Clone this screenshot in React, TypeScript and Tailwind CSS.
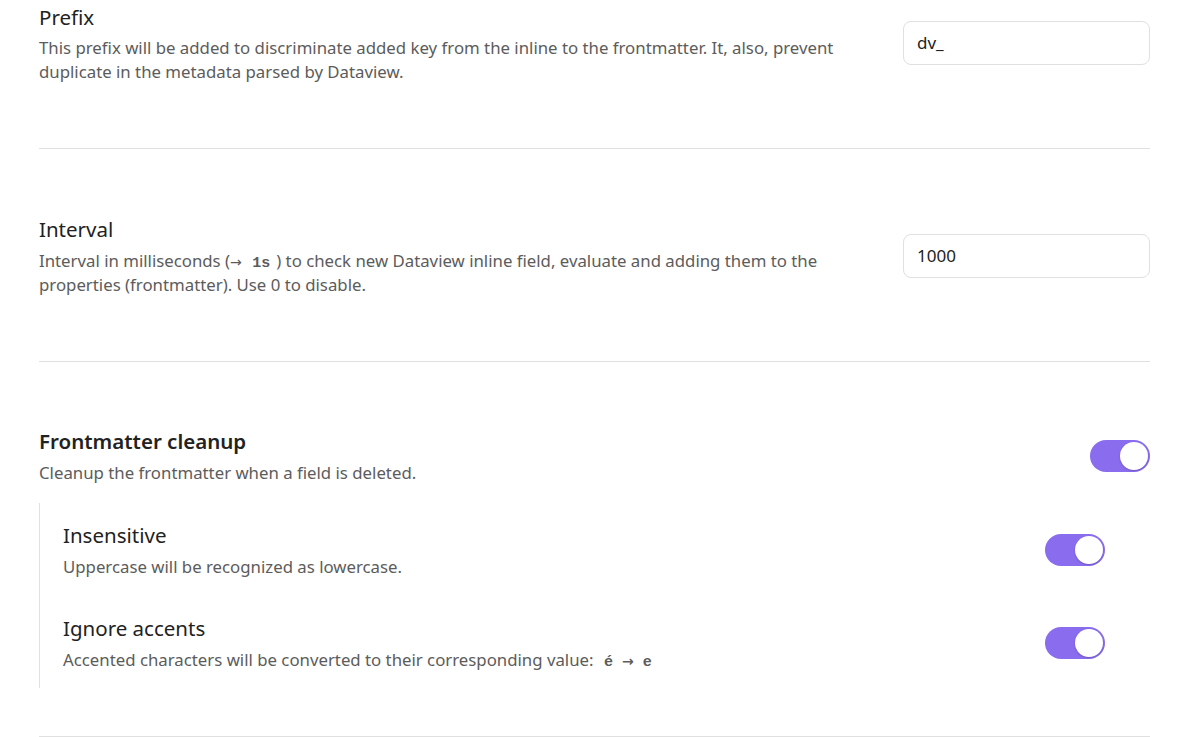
import React from "react";

const font = { fontFamily: '"Noto Sans", "Open Sans", sans-serif' };
const arrowFont = { fontFamily: '"DejaVu Sans", sans-serif' };

function Toggle() {
  return (
    <div className="relative w-[60px] h-[32px] rounded-full bg-[#8a6cef] shrink-0">
      <div className="absolute right-[2px] top-[2px] w-[28px] h-[28px] rounded-full bg-white shadow-[0_1px_2px_rgba(0,0,0,0.2)]" />
    </div>
  );
}

function Code({ children }: { children: React.ReactNode }) {
  return (
    <code
      className="text-[15px] leading-[0] text-[#5c5c5c] px-[6px] font-semibold"
      style={{ fontFamily: '"Liberation Mono", "DejaVu Sans Mono", monospace' }}
    >
      {children}
    </code>
  );
}

function Arrow() {
  return (
    <span className="text-[14px] leading-[0]" style={arrowFont}>
      →
    </span>
  );
}

function TextInput({ value }: { value: string }) {
  return (
    <div className="w-[247px] h-[44px] rounded-[8px] border border-[#e0e0e0] bg-white flex items-center px-[13px] text-[17px] text-[#222222] shrink-0">
      {value}
    </div>
  );
}

const titleCls = "text-[20.5px] leading-[30px]";
const descCls = "text-[16.8px] leading-[24px] text-[#5c5c5c]";

export default function App() {
  return (
    <div className="w-[1179px] h-[737px] bg-white overflow-hidden text-[#222222]" style={font}>
      <div className="pl-[39px] pr-[29px] pt-[2px]">
        {/* Prefix */}
        <div className="flex items-center justify-between">
          <div className="w-[845px]">
            <div className={titleCls}>Prefix</div>
            <div className={"mt-[4px] " + descCls}>
              This prefix will be added to discriminate added key from the inline to the frontmatter. It, also, prevent duplicate in the metadata parsed by Dataview.
            </div>
          </div>
          <TextInput value="dv_" />
        </div>
        <div className="mt-[64px] border-t border-[#e0e0e0]" />

        {/* Interval */}
        <div className="mt-[65px] flex items-center justify-between">
          <div className="w-[845px]">
            <div className={titleCls}>Interval</div>
            <div className={"mt-[5px] " + descCls}>
              Interval in milliseconds (<Arrow /> <Code>1s</Code>) to check new Dataview inline field, evaluate and adding them to the properties (frontmatter). Use 0 to disable.
            </div>
          </div>
          <TextInput value="1000" />
        </div>
        <div className="mt-[64px] border-t border-[#e0e0e0]" />

        {/* Frontmatter cleanup */}
        <div className="mt-[64px] flex items-center justify-between">
          <div>
            <div className={titleCls + " font-semibold"}>Frontmatter cleanup</div>
            <div className={"mt-[5px] " + descCls}>Cleanup the frontmatter when a field is deleted.</div>
          </div>
          <Toggle />
        </div>

        <div className="mt-[18px] border-l border-[#e0e0e0] pl-[23px] pr-[45px] pt-[17px] pb-[16px]">
          <div className="flex items-center justify-between">
            <div>
              <div className={titleCls}>Insensitive</div>
              <div className={"mt-[5px] " + descCls}>Uppercase will be recognized as lowercase.</div>
            </div>
            <Toggle />
          </div>
          <div className="mt-[34px] flex items-center justify-between">
            <div>
              <div className={titleCls}>Ignore accents</div>
              <div className={"mt-[5px] " + descCls}>
                Accented characters will be converted to their corresponding value:{" "}
                <Code>
                  é <Arrow /> e
                </Code>
              </div>
            </div>
            <Toggle />
          </div>
        </div>
        <div className="mt-[48px] border-t border-[#e0e0e0]" />
      </div>
    </div>
  );
}
